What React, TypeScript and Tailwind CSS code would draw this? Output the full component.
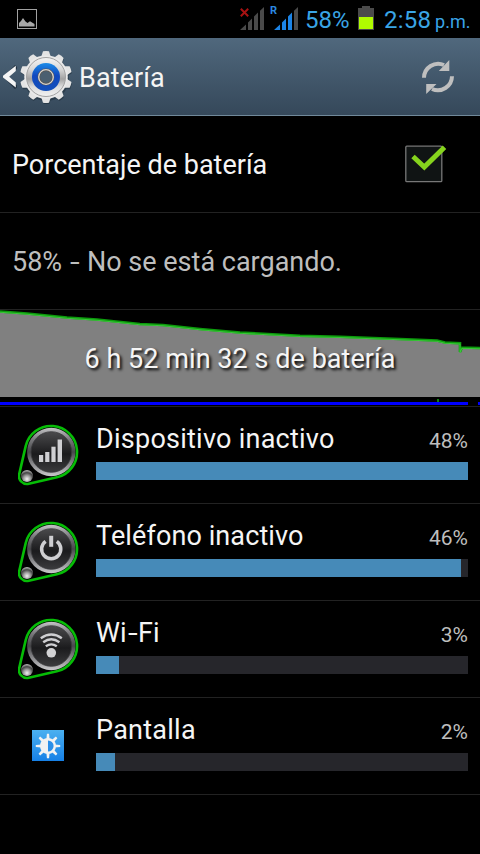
import type { ReactNode } from 'react';

type UsageItem = {
    name: ReactNode;
    id: string;
    percent: string;
    width: number;
    icon: ReactNode;
    tracking?: string;
};

function Gear() {
    const teeth = [0, 36, 72, 108, 144, 180, 216, 252, 288, 324];

    return (
        <svg width="54" height="54" viewBox="0 0 54 54" className="block shrink-0">
            <defs>
                <linearGradient id="gearBody" x1="0" y1="0" x2="0" y2="1">
                    <stop offset="0" stopColor="#f4f4f4" />
                    <stop offset="0.3" stopColor="#d8d8d8" />
                    <stop offset="0.55" stopColor="#a2a2a2" />
                    <stop offset="0.75" stopColor="#dcdcdc" />
                    <stop offset="1" stopColor="#f2f2f2" />
                </linearGradient>
                <linearGradient id="gearBlue" x1="0" y1="0" x2="0" y2="1">
                    <stop offset="0" stopColor="#1b8ce8" />
                    <stop offset="0.45" stopColor="#1048c0" />
                    <stop offset="1" stopColor="#1450b8" />
                </linearGradient>
            </defs>
            <g fill="#20303c" opacity="0.6" transform="translate(0.5 1.5)">
                <circle cx="27" cy="27" r="22.5" />
                {teeth.map((angle) => (
                    <path key={angle} d="M22.5 7 L24.2 1.2 H29.8 L31.5 7 Z" transform={`rotate(${angle} 27 27)`} />
                ))}
            </g>
            <g fill="#e4e4e4">
                {teeth.map((angle) => (
                    <path key={angle} d="M22 7.5 L24 1.2 Q27 0.6 30 1.2 L32 7.5 Z" transform={`rotate(${angle} 27 27)`} />
                ))}
            </g>
            <circle cx="27" cy="27" r="21.8" fill="#e9e9e9" />
            <circle cx="27" cy="27" r="19.5" fill="url(#gearBody)" stroke="#a2a2a2" strokeWidth="1" />
            <circle cx="27" cy="27" r="14" fill="url(#gearBlue)" />
            <circle cx="27" cy="27" r="7.2" fill="#4a5f70" stroke="#5f564c" strokeWidth="2.4" />
            <circle cx="27" cy="27" r="7.3" fill="none" stroke="#d5d7d7" strokeWidth="1.3" />
        </svg>
    );
}

// Round glossy badge with a green drop outline and a small pearl
function Orb({ children }: { children: ReactNode }) {
    return (
        <svg width="62" height="62" viewBox="0 0 62 62" className="block">
            <defs>
                <linearGradient id="orbRing" x1="0" y1="0" x2="0" y2="1">
                    <stop offset="0" stopColor="#c4c4c6" />
                    <stop offset="0.25" stopColor="#77777a" />
                    <stop offset="0.5" stopColor="#48484b" />
                    <stop offset="0.75" stopColor="#8b8b8e" />
                    <stop offset="1" stopColor="#c8c8ca" />
                </linearGradient>
                <linearGradient id="orbFace" x1="0" y1="0" x2="0" y2="1">
                    <stop offset="0" stopColor="#4a4a4c" />
                    <stop offset="0.55" stopColor="#1b1b1d" />
                    <stop offset="1" stopColor="#3b3b3d" />
                </linearGradient>
                <radialGradient id="pearl" cx="0.5" cy="0.75" r="0.7">
                    <stop offset="0" stopColor="#f2f2f2" />
                    <stop offset="0.4" stopColor="#a0a0a0" />
                    <stop offset="0.75" stopColor="#444444" />
                    <stop offset="1" stopColor="#aaaaaa" />
                </radialGradient>
            </defs>
            <circle cx="33.3" cy="28" r="24.2" fill="url(#orbRing)" />
            <circle cx="33.3" cy="28" r="20.3" fill="url(#orbFace)" stroke="#3a3a3c" strokeWidth="0.8" />
            <circle cx="9" cy="52" r="6" fill="url(#pearl)" />
            <path
                d="M7.7 22.1 A26 26 0 1 1 38.85 53.3 L10.8 59.8 A8 8 0 0 1 1.2 50.2 Z"
                fill="none"
                stroke="#06bc06"
                strokeWidth="2.6"
            />
            {children}
        </svg>
    );
}

// Wide hyphen, as the phone's font draws it
function Hyphen() {
    return <span className="mx-[2px] inline-block origin-center scale-x-[1.3]">-</span>;
}

const items: UsageItem[] = [
    {
        id: 'idle',
        name: 'Dispositivo inactivo',
        tracking: 'tracking-[0.25px]',
        percent: '48%',
        width: 372,
        icon: (
            <Orb>
                <g fill="#cfcfd2">
                    <rect x="21" y="31" width="4.2" height="7" />
                    <rect x="27.2" y="28" width="4.2" height="10" />
                    <rect x="33.4" y="22.7" width="4.2" height="15.3" />
                    <rect x="39.6" y="15.5" width="4.4" height="22.5" />
                </g>
            </Orb>
        ),
    },
    {
        id: 'phone',
        name: 'Teléfono inactivo',
        tracking: 'tracking-[0.1px]',
        percent: '46%',
        width: 365,
        icon: (
            <Orb>
                <g fill="none" stroke="#cfcfd2">
                    <path d="M27.6 20.3 A9.6 9.6 0 1 0 38.8 20.3" strokeWidth="3.5" />
                    <path d="M33.2 14.8 V25.8" strokeWidth="4" />
                </g>
            </Orb>
        ),
    },
    {
        id: 'wifi',
        name: (
            <>
                Wi
                <Hyphen />
                Fi
            </>
        ),
        percent: '3%',
        width: 23,
        icon: (
            <Orb>
                <g fill="none" stroke="#cfcfd2" strokeWidth="2.4">
                    <path d="M22.8 20.2 Q33.3 12.8 43.8 20.2" />
                    <path d="M25.2 24.3 Q33.3 18.4 41.4 24.3" />
                    <path d="M27.8 28.3 Q33.3 24.4 38.8 28.3" />
                </g>
                <circle cx="33.3" cy="34.8" r="4.8" fill="#d2d2d4" />
            </Orb>
        ),
    },
    {
        id: 'screen',
        name: 'Pantalla',
        tracking: 'tracking-[0.25px]',
        percent: '2%',
        width: 19,
        icon: <BrightnessIcon />,
    },
];

function BrightnessIcon() {
    return (
        <svg width="32" height="31" viewBox="0 0 32 31" className="mt-[15px] ml-[14px] block">
            <defs>
                <linearGradient id="brightBg" x1="0" y1="0" x2="0" y2="1">
                    <stop offset="0" stopColor="#4bb0f0" />
                    <stop offset="1" stopColor="#1680e6" />
                </linearGradient>
            </defs>
            <rect width="32" height="31" fill="url(#brightBg)" />
            <g fill="#f2f2f2">
                {[0, 45, 90, 135, 180, 225, 270, 315].map((angle) => (
                    <path key={angle} d="M14.9 3.8 H17.1 L17.6 9.5 H14.4 Z" transform={`rotate(${angle} 16 16)`} />
                ))}
                <circle cx="16" cy="16" r="8" />
            </g>
            <path d="M16 10.4 A5.6 5.6 0 0 1 16 21.6 Z" fill="#2b8fe8" />
        </svg>
    );
}

function Signal({ bars }: { bars: string }) {
    return (
        <svg width="24" height="23" viewBox="0 0 24 23" className="block">
            <path d="M0 23 L6 17.5 V23 Z M8 15.5 L12 11.5 V23 H8 Z M14 9.5 L18 5.5 V23 H14 Z" fill={bars} />
            <path d="M20 3.8 L24 0 V23 H20 Z" fill="#4a4a4a" />
        </svg>
    );
}

function StatusBar() {
    return (
        <div className="flex h-[38px] items-start bg-black text-[#3aa5e6]">
            <svg width="20" height="20" viewBox="0 0 20 20" className="mt-[9px] ml-[17px]">
                <rect x="0.5" y="0.5" width="19" height="19" fill="none" stroke="#a2a2a2" />
                <path d="M2 17.5 V14 L4 12 L6 9 L8.5 12.5 L10.5 14 L13 12.2 L17.5 15 V17.5 Z" fill="#a8a8a8" />
            </svg>
            <div className="relative mt-[7px] ml-[203px]">
                <Signal bars="#4a4a4a" />
                <svg width="9" height="9" viewBox="0 0 9 9" className="absolute top-[1px] left-0">
                    <path d="M0.8 0.8 L8.2 8.2 M8.2 0.8 L0.8 8.2" stroke="#a81212" strokeWidth="2" />
                </svg>
            </div>
            <div className="relative mt-[7px] ml-[10px]">
                <Signal bars="#1c84e6" />
                <span className="absolute -top-[2px] -left-[4px] text-[11px] leading-[11px] font-bold text-[#2b88e0]">R</span>
            </div>
            <span className="mt-[6px] ml-[7px] w-[53px] text-[24px] leading-[28px] whitespace-nowrap">58%</span>
            <svg width="16" height="24" viewBox="0 0 16 24" className="mt-[6px]">
                <path d="M0 2 H4 V0 H12 V2 H16 V24 H0 Z" fill="#4b4b4b" />
                <rect x="1" y="11" width="14" height="12" fill="#b0fb00" />
            </svg>
            <span className="mt-[6px] ml-[10px] text-[24px] leading-[28px] tracking-[0.2px] whitespace-nowrap">2:58</span>
            <span className="mt-[12px] ml-[4px] text-[18px] leading-[20px] whitespace-nowrap">p.m.</span>
        </div>
    );
}

function Header() {
    return (
        <header className="flex h-[78px] items-center border-b border-[#71899a] bg-linear-to-b from-[#50687d] to-[#35485a]">
            <svg width="14" height="24" viewBox="0 0 14 24" className="ml-[3px] shrink-0">
                <path d="M13.4 1.5 L3 12 L13.4 22.8" fill="none" stroke="#233240" strokeWidth="4" />
                <path d="M12.8 0.8 V6 L6.2 11.7 L12.8 17.6 V22.4 L0 12.4 V10.8 Z" fill="#f5f5f5" />
            </svg>
            <span className="ml-[2px]">
                <Gear />
            </span>
            <h1 className="mt-[2px] ml-[6px] text-[27px] leading-[32px] tracking-[0.1px] text-[#f5f5f5]">Batería</h1>
            <svg width="34" height="36" viewBox="0 0 34 36" className="mr-[25px] ml-auto">
                <g fill="none" stroke="#bfbfbf" strokeWidth="4">
                    <path d="M3 18.8 A14.2 14.2 0 0 1 23 6" />
                    <path d="M31 17.2 A14.2 14.2 0 0 1 11 30" />
                </g>
                <path d="M28.3 1 V12 H17.8 Z M5.2 35 V25 H15.5 Z" fill="#bfbfbf" />
            </svg>
        </header>
    );
}

function HistoryChart() {
    const line = '0,1.5 27,3.5 67,7.5 97,9.5 140,14 163,15 200,19 240,22.5 300,25.8 340,26.8 400,29 437,30.5 445,32.5 460,33.2 460,42 462,37.5 480,38';

    return (
        <div className="relative h-[97px] border-b border-[#222222]">
            <svg width="480" height="96" viewBox="0 0 480 96" className="block">
                <polygon points={`${line} 480,87 0,87`} fill="#808080" />
                <polyline points={line} fill="none" stroke="#0c9a0c" strokeWidth="2.6" />
                <polyline points={line} fill="none" stroke="#38c838" strokeWidth="1.1" transform="translate(0 0.7)" />
                <rect x="437" y="89" width="2" height="3" fill="#108010" />
                <path d="M0 92 H468 V95 H0 Z M478 92 H480 V95 H478 Z" fill="#0000ff" />
            </svg>
            <div className="absolute inset-x-0 top-[33px] text-center text-[27px] leading-[32px] tracking-[0.05px] text-[#f5f5f5] [text-shadow:2px_2px_3px_#000]">
                6 h 52 min 32 s de batería
            </div>
        </div>
    );
}

export default function App() {
    return (
        <main className="h-[854px] w-[480px] overflow-hidden bg-black font-['Roboto',sans-serif] text-[27px] text-[#f5f5f5]">
            <StatusBar />
            <Header />

            <div className="flex h-[97px] items-center justify-between border-b border-[#222222] pl-3">
                <span className="mt-[2px] leading-[32px]">Porcentaje de batería</span>
                <svg width="42" height="40" viewBox="0 0 42 40" className="mr-[33px] mb-[2px]">
                    <rect x="0.8" y="3.2" width="36" height="35.5" rx="1" fill="#101414" stroke="#777777" strokeWidth="1.3" />
                    <path d="M8 13.5 L19.3 24 L39.5 4.2" fill="none" stroke="#86d31d" strokeWidth="5" />
                </svg>
            </div>

            <div className="flex h-[97px] items-center border-b border-[#222222] pl-3 text-[#bebebe]">
                <span className="mt-[2px] leading-[32px]">
                    58% <Hyphen /> No se está cargando.
                </span>
            </div>

            <HistoryChart />

            {items.map((item) => (
                <div key={item.id} className="flex h-[97px] border-b border-[#222222] pt-[17px] pr-3 pl-[18px]">
                    <div className="w-[78px] shrink-0">{item.icon}</div>
                    <div className="grow">
                        <div className="-mt-[1px] flex items-baseline justify-between">
                            <span className={`leading-[32px] ${item.tracking ?? ''}`}>{item.name}</span>
                            <span className="text-[21px] leading-[24px] text-[#bebebe]">{item.percent}</span>
                        </div>
                        <div className="mt-[7px] h-[18px] bg-[#26262b]">
                            <div className="h-full bg-[#468ab8]" style={{ width: item.width }} />
                        </div>
                    </div>
                </div>
            ))}
        </main>
    );
}
